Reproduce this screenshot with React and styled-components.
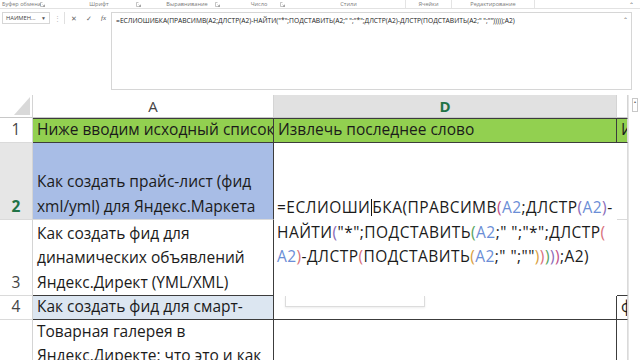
import React from "react";
import styled, { createGlobalStyle } from "styled-components";

const GlobalStyle = createGlobalStyle`
  html, body {
    margin: 0;
    padding: 0;
    background: #ffffff;
  }
  body {
    width: 640px;
    height: 360px;
    overflow: hidden;
    font-family: "Open Sans", "Noto Sans", sans-serif;
  }
`;

const Page = styled.div`
  width: 640px;
  height: 360px;
  overflow: hidden;
  display: flex;
  flex-direction: column;
  background: #ffffff;
`;

const RibbonLabels = styled.div`
  display: flex;
  height: 9px;
  border-bottom: 1px solid #e2e2e2;
`;

const Group = styled.div`
  width: ${({ $w }) => $w}px;
  flex: ${({ $grow }) => ($grow ? 1 : "none")};
  position: relative;
  display: flex;
  align-items: center;
  justify-content: ${({ $left }) => ($left ? "flex-start" : "center")};
  padding-left: ${({ $left }) => ($left ? "2px" : "0")};
  border-right: ${({ $sep }) => ($sep ? "1px solid #e4e4e4" : "none")};
  box-sizing: border-box;
  font-size: 5.6px;
  color: #7a7a7a;
  white-space: nowrap;
`;

const Launcher = styled.svg`
  position: absolute;
  right: ${({ $r }) => $r}px;
  top: 2px;
  width: 5px;
  height: 5px;
`;

const Collapse = styled.span`
  position: absolute;
  right: 6px;
  top: 1px;
  font-size: 6px;
  color: #666;
`;

const FormulaRow = styled.div`
  display: flex;
  align-items: flex-start;
  padding: 3px 8px 0 2px;
  height: 82px;
`;

const NameBox = styled.div`
  width: 48px;
  height: 12px;
  border: 1px solid #d6d6d6;
  box-sizing: border-box;
  display: flex;
  align-items: center;
  justify-content: space-between;
  padding: 0 3px 0 3px;
  font-size: 5.8px;
  color: #444;
`;

const Caret5 = styled.span`
  font-size: 5px;
  color: #555;
`;

const Dots = styled.div`
  width: 15px;
  height: 12px;
  display: flex;
  align-items: center;
  justify-content: center;
  color: #b8b8b8;
  font-size: 7px;
  border-right: 1px solid #e0e0e0;
  box-sizing: border-box;
`;

const FxButtons = styled.div`
  display: flex;
  align-items: center;
  height: 12px;
  gap: 9px;
  padding: 0 5px 0 6px;
  color: #666;
  font-size: 7px;
`;

const Fx = styled.span`
  font-family: "Liberation Serif", serif;
  font-style: italic;
  font-size: 7px;
  color: #555;
`;

const FormulaBox = styled.div`
  flex: 1;
  height: 78px;
  border: 1px solid #d6d6d6;
  box-sizing: border-box;
  padding: 3px 4px;
  position: relative;
  font-size: 6.7px;
  color: #222;
  white-space: nowrap;
`;

const FormulaText = styled.span`
  display: inline-block;
  transform-origin: left center;
`;

const BoxCollapse = styled(Collapse)`
  top: 3px;
  right: 3px;
`;

const Sheet = styled.div`
  display: grid;
  grid-template-columns: 33px 241px 343px 11px 12px;
  grid-template-rows: 23px 25px 77px 76px 24px 74px;
  margin-top: 5px;
  font-size: 15.5px;
  color: #1b1b1b;
`;

const Corner = styled.div`
  border-right: 1px solid #d4d4d4;
  border-bottom: 1px solid #c8c8c8;
  position: relative;
`;

const CornerTri = styled.div`
  position: absolute;
  right: 2px;
  bottom: 2px;
  width: 0;
  height: 0;
  border-left: 16px solid transparent;
  border-bottom: 18px solid #d9d9d9;
`;

const ColHead = styled.div`
  display: flex;
  align-items: center;
  justify-content: center;
  background: ${({ $sel }) => ($sel ? "#e1e1e1" : "#ffffff")};
  color: ${({ $sel }) => ($sel ? "#217346" : "#444")};
  font-weight: ${({ $sel }) => ($sel ? 700 : 400)};
  border-right: 1px solid #d4d4d4;
  border-bottom: 1px solid #c8c8c8;
  font-size: 15px;
`;

const RowHead = styled.div`
  display: flex;
  align-items: flex-end;
  justify-content: center;
  padding-bottom: 1px;
  line-height: 24px;
  background: ${({ $sel }) => ($sel ? "#e6e6e6" : "#ffffff")};
  color: ${({ $sel }) => ($sel ? "#217346" : "#444")};
  font-weight: ${({ $sel }) => ($sel ? 700 : 400)};
  border-right: 1px solid #d4d4d4;
  border-bottom: 1px solid #dadada;
  box-sizing: border-box;
`;

const Cell = styled.div`
  position: relative;
  display: flex;
  flex-direction: column;
  justify-content: flex-end;
  padding: 0 0 1px 4px;
  line-height: 24.5px;
  white-space: nowrap;
  overflow: ${({ $clip }) => ($clip ? "hidden" : "visible")};
  background: ${({ $fill }) => $fill || "#ffffff"};
  border-right: 1px solid ${({ $dr }) => ($dr ? "#3c3c3c" : "#dadada")};
  border-bottom: 1px solid ${({ $db }) => ($db ? "#3c3c3c" : "#dadada")};
  border-top: ${({ $dt }) => ($dt ? "1px solid #3c3c3c" : "none")};
  box-sizing: border-box;
  z-index: ${({ $z }) => $z || 0};
`;

const ScrollCol = styled.div`
  grid-column: 5;
  grid-row: 1 / span 6;
  background: #ffffff;
  border-left: 1px solid #e6e6e6;
  display: flex;
  justify-content: center;
  padding-top: 3px;
`;

const ScrollArrow = styled.div`
  width: 6px;
  height: 14px;
  border: 1px solid #c8c8c8;
  box-sizing: border-box;
  font-size: 4px;
  color: #666;
  text-align: center;
  line-height: 6px;
`;

const Editor = styled.div`
  position: absolute;
  left: 0;
  top: 0;
  right: -1px;
  height: 153px;
  background: #ffffff;
  padding: 52px 0 0 3px;
  box-sizing: border-box;
  line-height: 24.5px;
  letter-spacing: 0.45px;
  white-space: nowrap;
  z-index: 3;
`;

const Caret = styled.span`
  display: inline-block;
  width: 0;
  height: 17px;
  border-left: 1px solid #111;
  vertical-align: -3px;
  margin: 0 0.5px;
`;

const Tok = styled.span`
  color: ${({ $c }) => $c};
`;

const GhostTip = styled.div`
  position: absolute;
  left: 11px;
  top: 0;
  width: 138px;
  height: 10px;
  border: 1px solid #dcdcdc;
  border-top: none;
  box-shadow: 0 1px 2px rgba(0, 0, 0, 0.08);
  background: #ffffff;
`;

const REF = "#6b8ed6";
const D = ["#1b1b1b", "#1b1b1b", "#c0508a", "#8a6ab8", "#56a35e", "#d8707a", "#d9a03e"];

const lines = [
  [
    ["=ЕСЛИОШИ", D[0]],
    ["CARET"],
    ["БКА(ПРАВСИМВ", D[0]],
    ["(", D[2]],
    ["A2", REF],
    [";ДЛСТР", D[0]],
    ["(", D[3]],
    ["A2", REF],
    [")", D[3]],
    ["-", D[0]],
  ],
  [
    ["НАЙТИ", D[0]],
    ["(", D[3]],
    ['"*";ПОДСТАВИТЬ', D[0]],
    ["(", D[4]],
    ["A2", REF],
    [';" ";"*";ДЛСТР', D[0]],
    ["(", D[5]],
  ],
  [
    ["A2", REF],
    [")", D[5]],
    ["-ДЛСТР", D[0]],
    ["(", D[5]],
    ["ПОДСТАВИТЬ", D[0]],
    ["(", D[6]],
    ["A2", REF],
    [';" ";""', D[0]],
    [")", D[6]],
    [")", D[5]],
    [")", D[4]],
    [")", D[3]],
    [")", D[2]],
    [";A2)", D[0]],
  ],
];

function LauncherIcon({ r }) {
  return (
    <Launcher $r={r} viewBox="0 0 10 10">
      <path d="M1 1h4M1 1v8h8V5M5 5l4 4M9 6v3H6" stroke="#888" strokeWidth="1" fill="none" />
    </Launcher>
  );
}

function App() {
  const formula =
    '=ЕСЛИОШИБКА(ПРАВСИМВ(A2;ДЛСТР(A2)-НАЙТИ("*";ПОДСТАВИТЬ(A2;" ";"*";ДЛСТР(A2)-ДЛСТР(ПОДСТАВИТЬ(A2;" ";"")))));A2)';

  return (
    <Page>
      <GlobalStyle />
      <RibbonLabels>
        <Group $w={50} $left>
          Буфер обмена
          <LauncherIcon r={5} />
        </Group>
        <Group $w={98}>
          Шрифт
          <LauncherIcon r={7} />
        </Group>
        <Group $w={78}>
          Выравнивание
          <LauncherIcon r={6} />
        </Group>
        <Group $w={66}>
          Число
          <LauncherIcon r={7} />
        </Group>
        <Group $w={114} $sep>
          Стили
        </Group>
        <Group $w={46} $sep>
          Ячейки
        </Group>
        <Group $w={83} $sep>
          Редактирование
        </Group>
        <Group $grow>
          <Collapse>⌃</Collapse>
        </Group>
      </RibbonLabels>

      <FormulaRow>
        <NameBox>
          <span>НАИМЕН...</span>
          <Caret5>▼</Caret5>
        </NameBox>
        <Dots>⋮</Dots>
        <FxButtons>
          <span>✕</span>
          <span>✓</span>
          <Fx>fx</Fx>
        </FxButtons>
        <FormulaBox>
          <FormulaText>{formula}</FormulaText>
          <BoxCollapse>⌃</BoxCollapse>
        </FormulaBox>
      </FormulaRow>

      <Sheet>
        <Corner>
          <CornerTri />
        </Corner>
        <ColHead>A</ColHead>
        <ColHead $sel>D</ColHead>
        <ColHead />
        <ScrollCol>
          <ScrollArrow>▴</ScrollArrow>
        </ScrollCol>

        <RowHead>1</RowHead>
        <Cell $fill="#92d050" $dr $db $dt $clip>
          Ниже вводим исходный список
        </Cell>
        <Cell $fill="#92d050" $dr $db $dt>
          Извлечь последнее слово
        </Cell>
        <Cell $fill="#92d050" $db $dt $clip>
          Извлечь
        </Cell>

        <RowHead $sel>2</RowHead>
        <Cell $fill="#a8bde6" $dr>
          <span>Как создать прайс-лист (фид</span>
          <span>xml/yml) для Яндекс.Маркета</span>
        </Cell>
        <Cell $dr $z={3}>
          <Editor>
            {lines.map((ln, i) => (
              <div key={i}>
                {ln.map((t, j) =>
                  t[0] === "CARET" ? (
                    <Caret key={j} />
                  ) : (
                    <Tok key={j} $c={t[1]}>
                      {t[0]}
                    </Tok>
                  )
                )}
              </div>
            ))}
          </Editor>
        </Cell>
        <Cell />

        <RowHead>3</RowHead>
        <Cell $dr $db>
          <span>Как создать фид для</span>
          <span>динамических объявлений</span>
          <span>Яндекс.Директ (YML/XML)</span>
        </Cell>
        <Cell $dr $db />
        <Cell $db />

        <RowHead>4</RowHead>
        <Cell $fill="#dce6f1" $dr $db>
          Как создать фид для смарт-
        </Cell>
        <Cell $dr $db>
          <GhostTip />
        </Cell>
        <Cell $db $clip>
          фото
        </Cell>

        <RowHead />
        <Cell $dr>
          <span>Товарная галерея в</span>
          <span>Яндекс.Директе: что это и как</span>
          <span>настроить</span>
        </Cell>
        <Cell $dr />
        <Cell />
      </Sheet>
    </Page>
  );
}

export default App;
